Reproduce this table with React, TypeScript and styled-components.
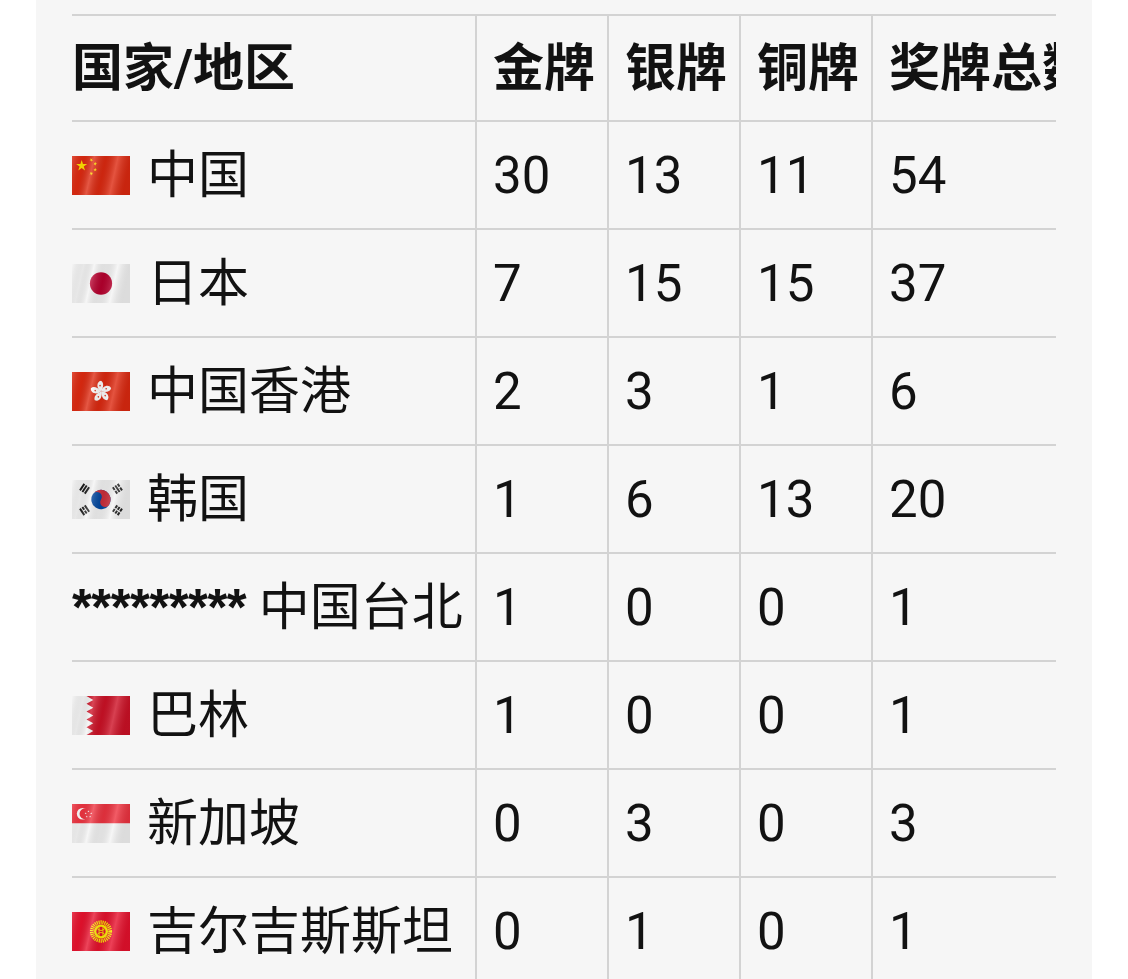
import React from 'react';
import styled, { createGlobalStyle } from 'styled-components';

const GlobalStyle = createGlobalStyle`
  html, body {
    margin: 0;
    padding: 0;
    background: #ffffff;
  }
  body {
    font-family: Roboto, "Noto Sans CJK SC", sans-serif;
    color: #121212;
  }
`;

const Panel = styled.div`
  margin: 0 36px;
  height: 979px;
  padding: 14px 36px 0;
  box-sizing: border-box;
  background: #f6f6f6;
  overflow: hidden;
`;

const TableClip = styled.div`
  width: 984px;
  overflow: hidden;
`;

const Table = styled.table`
  border-collapse: collapse;
  table-layout: fixed;
  width: 1030px;
  font-size: 51px;
  line-height: 1;
`;

const HeadRow = styled.tr`
  height: 106px;
`;

const BodyRow = styled.tr`
  height: 108px;
`;

const HeadCell = styled.th<{ $first?: boolean }>`
  text-align: left;
  font-weight: 700;
  white-space: nowrap;
  overflow: hidden;
  padding: 0 ${(p) => (p.$first ? '0' : '16px')};
  border-top: 2px solid #d3d3d3;
  border-left: ${(p) => (p.$first ? 'none' : '2px solid #d3d3d3')};
  vertical-align: middle;
`;

const Cell = styled.td<{ $first?: boolean }>`
  font-weight: 400;
  white-space: nowrap;
  padding: 0 ${(p) => (p.$first ? '0' : '16px')};
  border-top: 2px solid #d3d3d3;
  border-left: ${(p) => (p.$first ? 'none' : '2px solid #d3d3d3')};
  vertical-align: middle;
`;

const Name = styled.div`
  display: flex;
  align-items: center;
  gap: 17px;
`;

const Masked = styled.span`
  font-family: "Liberation Sans", Roboto, sans-serif;
  font-weight: 700;
  letter-spacing: -0.5px;
`;

const FlagBox = styled.svg`
  width: 58px;
  height: 39px;
  flex: none;
  display: block;
`;

const starPath = (cx: number, cy: number, r: number, rot = 0) => {
  const pts: string[] = [];
  for (let i = 0; i < 10; i++) {
    const rad = i % 2 === 0 ? r : r * 0.38;
    const a = (Math.PI / 5) * i - Math.PI / 2 + rot;
    pts.push(`${(cx + rad * Math.cos(a)).toFixed(2)},${(cy + rad * Math.sin(a)).toFixed(2)}`);
  }
  return `M${pts.join('L')}Z`;
};

// cloth shading so the flags look waved like in the screenshot
const Wave = ({ id }: { id: string }) => (
  <>
    <defs>
      <linearGradient id={id} x1="0" y1="0" x2="1" y2="0.15">
        <stop offset="0" stopColor="#fff" stopOpacity="0.18" />
        <stop offset="0.2" stopColor="#000" stopOpacity="0.05" />
        <stop offset="0.38" stopColor="#fff" stopOpacity="0.22" />
        <stop offset="0.58" stopColor="#000" stopOpacity="0.08" />
        <stop offset="0.78" stopColor="#fff" stopOpacity="0.2" />
        <stop offset="1" stopColor="#000" stopOpacity="0.1" />
      </linearGradient>
    </defs>
    <rect width="60" height="40" fill={`url(#${id})`} />
  </>
);

const FlagCN = () => (
  <FlagBox viewBox="0 0 60 40" preserveAspectRatio="none">
    <rect width="60" height="40" fill="#de2910" />
    <path d={starPath(10, 10, 6)} fill="#ffde00" />
    <path d={starPath(20, 4, 2, 0.6)} fill="#ffde00" />
    <path d={starPath(24, 8, 2, 0.3)} fill="#ffde00" />
    <path d={starPath(24, 14, 2)} fill="#ffde00" />
    <path d={starPath(20, 18, 2, 0.6)} fill="#ffde00" />
    <Wave id="w-cn" />
  </FlagBox>
);

const FlagJP = () => (
  <FlagBox viewBox="0 0 60 40" preserveAspectRatio="none">
    <rect width="60" height="40" fill="#f4f4f4" />
    <circle cx="30" cy="20" r="11.5" fill="#b8002e" />
    <Wave id="w-jp" />
  </FlagBox>
);

const FlagHK = () => (
  <FlagBox viewBox="0 0 60 40" preserveAspectRatio="none">
    <rect width="60" height="40" fill="#de2910" />
    <g transform="translate(30 20)">
      {[0, 72, 144, 216, 288].map((a) => (
        <g key={a} transform={`rotate(${a})`}>
          <path d="M0 0 C-5 -3 -5 -10 0 -11 C3 -9 3 -5 0 0 Z" fill="#fff" />
          <circle cx="-1" cy="-6" r="0.8" fill="#de2910" />
        </g>
      ))}
    </g>
    <Wave id="w-hk" />
  </FlagBox>
);

const Trigram = ({ x, y, rot, pattern }: { x: number; y: number; rot: number; pattern: boolean[][] }) => (
  <g transform={`translate(${x} ${y}) rotate(${rot})`}>
    {pattern.map((row, i) =>
      row.length === 1 ? (
        <rect key={i} x={-4} y={-4 + i * 3} width={8} height={2} fill="#1a1a1a" />
      ) : (
        <g key={i}>
          <rect x={-4} y={-4 + i * 3} width={3.4} height={2} fill="#1a1a1a" />
          <rect x={0.6} y={-4 + i * 3} width={3.4} height={2} fill="#1a1a1a" />
        </g>
      ),
    )}
  </g>
);

const FlagKR = () => (
  <FlagBox viewBox="0 0 60 40" preserveAspectRatio="none">
    <rect width="60" height="40" fill="#f4f4f4" />
    <g transform="translate(30 20) rotate(33.7)">
      <circle r="10" fill="#0047a0" />
      <path d="M-10 0 A10 10 0 0 1 10 0 A5 5 0 0 1 0 0 A5 5 0 0 0 -10 0 Z" fill="#cd2e3a" />
    </g>
    <Trigram x={13} y={9} rot={-56} pattern={[[true], [true], [true]]} />
    <Trigram x={47} y={31} rot={-56} pattern={[[true, true], [true, true], [true, true]]} />
    <Trigram x={47} y={9} rot={56} pattern={[[true, true], [true], [true, true]]} />
    <Trigram x={13} y={31} rot={56} pattern={[[true], [true, true], [true]]} />
    <Wave id="w-kr" />
  </FlagBox>
);

const FlagBH = () => (
  <FlagBox viewBox="0 0 60 40" preserveAspectRatio="none">
    <rect width="60" height="40" fill="#ce1126" />
    <path
      d="M0 0 H15 L22 4 L15 8 L22 12 L15 16 L22 20 L15 24 L22 28 L15 32 L22 36 L15 40 H0 Z"
      fill="#f4f4f4"
    />
    <Wave id="w-bh" />
  </FlagBox>
);

const FlagSG = () => (
  <FlagBox viewBox="0 0 60 40" preserveAspectRatio="none">
    <rect width="60" height="20" fill="#ef3340" />
    <rect y="20" width="60" height="20" fill="#f4f4f4" />
    <circle cx="11" cy="10" r="6" fill="#fff" />
    <circle cx="13.4" cy="10" r="5.6" fill="#ef3340" />
    {[0, 72, 144, 216, 288].map((a) => {
      const rad = ((a - 90) * Math.PI) / 180;
      return <path key={a} d={starPath(17 + 3 * Math.cos(rad), 10.5 + 3 * Math.sin(rad), 1.1)} fill="#fff" />;
    })}
    <Wave id="w-sg" />
  </FlagBox>
);

const FlagKG = () => (
  <FlagBox viewBox="0 0 60 40" preserveAspectRatio="none">
    <rect width="60" height="40" fill="#e8112d" />
    <circle cx="30" cy="20" r="9.5" fill="none" stroke="#ffef00" strokeWidth="4" strokeDasharray="1.2 0.8" />
    <circle cx="30" cy="20" r="7.2" fill="#ffef00" />
    <circle cx="30" cy="20" r="4.8" fill="#e8112d" />
    <path d="M26 17 Q30 21 34 17 M26 23 Q30 19 34 23 M28 15.5 V24.5 M32 15.5 V24.5" stroke="#ffef00" strokeWidth="0.9" fill="none" />
    <Wave id="w-kg" />
  </FlagBox>
);

type Row = {
  flag?: React.ReactNode;
  mask?: string;
  name: string;
  gold: number;
  silver: number;
  bronze: number;
  total: number;
};

const rows: Row[] = [
  { flag: <FlagCN />, name: '中国', gold: 30, silver: 13, bronze: 11, total: 54 },
  { flag: <FlagJP />, name: '日本', gold: 7, silver: 15, bronze: 15, total: 37 },
  { flag: <FlagHK />, name: '中国香港', gold: 2, silver: 3, bronze: 1, total: 6 },
  { flag: <FlagKR />, name: '韩国', gold: 1, silver: 6, bronze: 13, total: 20 },
  { mask: '*********', name: '中国台北', gold: 1, silver: 0, bronze: 0, total: 1 },
  { flag: <FlagBH />, name: '巴林', gold: 1, silver: 0, bronze: 0, total: 1 },
  { flag: <FlagSG />, name: '新加坡', gold: 0, silver: 3, bronze: 0, total: 3 },
  { flag: <FlagKG />, name: '吉尔吉斯斯坦', gold: 0, silver: 1, bronze: 0, total: 1 },
];

export default function App() {
  return (
    <>
      <GlobalStyle />
      <Panel>
        <TableClip>
          <Table>
            <colgroup>
              <col style={{ width: 404 }} />
              <col style={{ width: 132 }} />
              <col style={{ width: 132 }} />
              <col style={{ width: 132 }} />
              <col style={{ width: 230 }} />
            </colgroup>
            <thead>
              <HeadRow>
                <HeadCell $first>国家/地区</HeadCell>
                <HeadCell>金牌</HeadCell>
                <HeadCell>银牌</HeadCell>
                <HeadCell>铜牌</HeadCell>
                <HeadCell>奖牌总数</HeadCell>
              </HeadRow>
            </thead>
            <tbody>
              {rows.map((r) => (
                <BodyRow key={r.name}>
                  <Cell $first>
                    {r.mask ? (
                      <span>
                        <Masked>{r.mask}</Masked> {r.name}
                      </span>
                    ) : (
                      <Name>
                        {r.flag}
                        <span>{r.name}</span>
                      </Name>
                    )}
                  </Cell>
                  <Cell>{r.gold}</Cell>
                  <Cell>{r.silver}</Cell>
                  <Cell>{r.bronze}</Cell>
                  <Cell>{r.total}</Cell>
                </BodyRow>
              ))}
            </tbody>
          </Table>
        </TableClip>
      </Panel>
    </>
  );
}
